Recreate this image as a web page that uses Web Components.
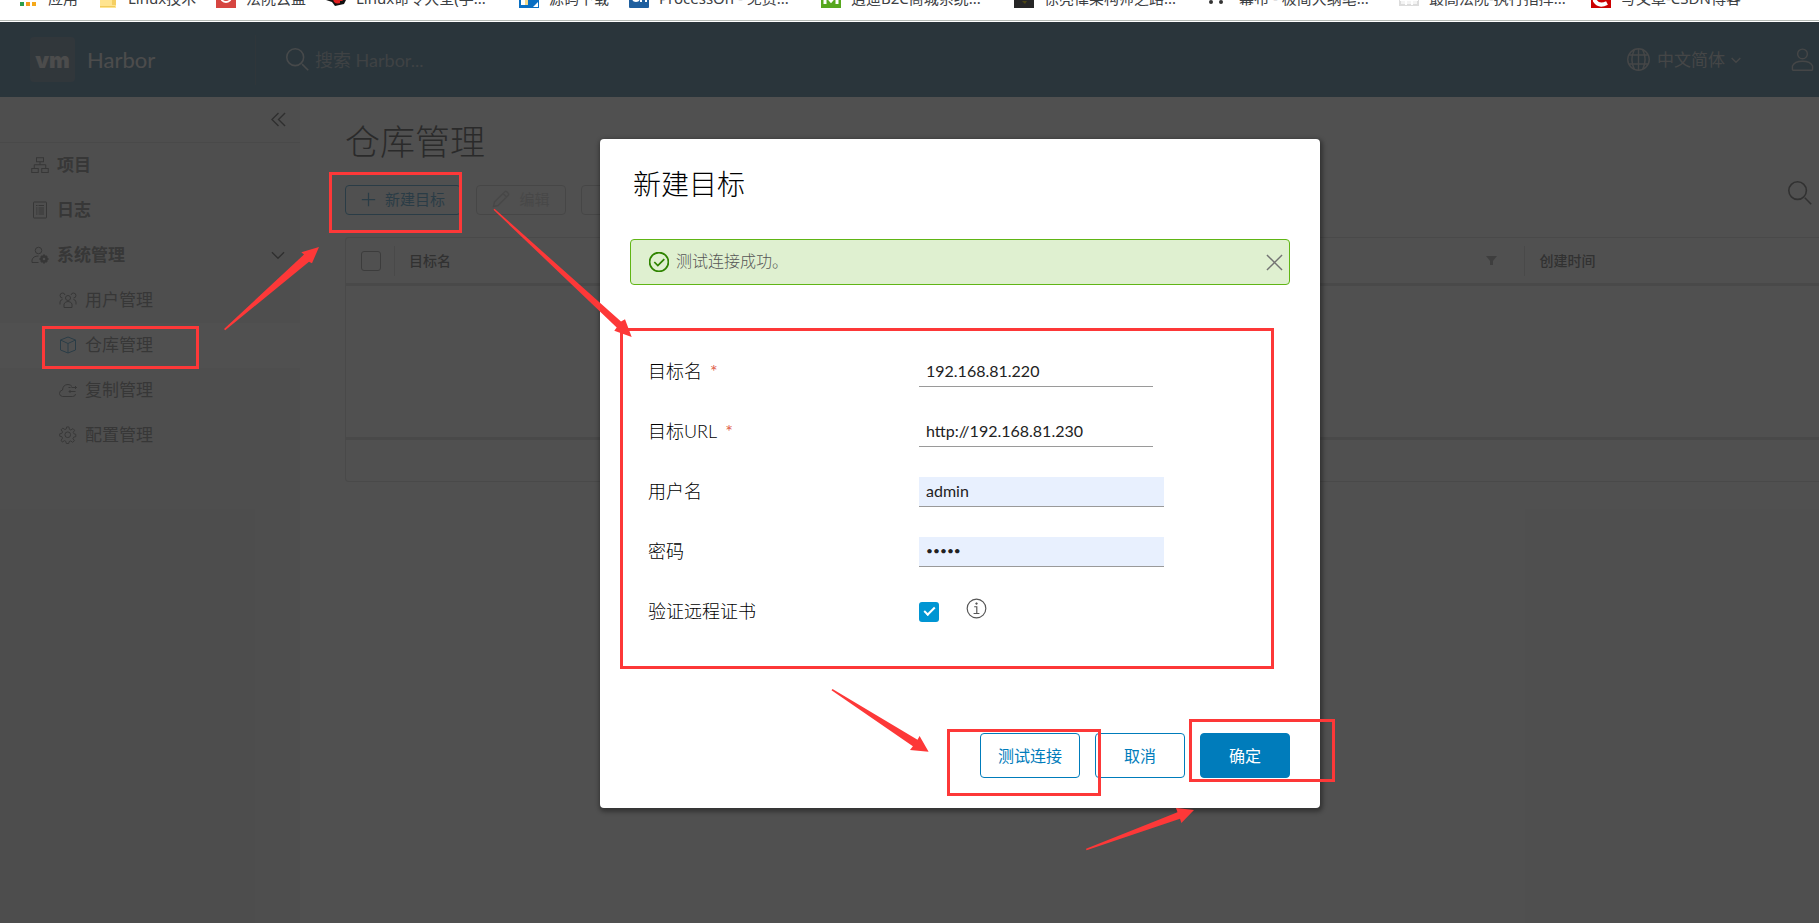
<!DOCTYPE html>
<html lang="zh-CN">
<head>
<meta charset="utf-8">
<meta name="viewport" content="width=device-width, initial-scale=1">
<title>Harbor</title>
<style>
  html, body { margin: 0; height: 100%; }
  body {
    position: relative;
    display: flex;
    flex-direction: column;
    min-height: 100vh;
    overflow: hidden;
    background: #fff;
    color: #000;
    font: 400 16px/24px Lato, "Noto Sans CJK SC", sans-serif;
  }
</style>
</head>
<body>
<bookmark-bar>
  <bookmark-item icon="apps" style="--w:80px">应用</bookmark-item>
  <bookmark-item icon="folder" style="--w:116px">Linux技术</bookmark-item>
  <bookmark-item icon="court" style="--w:110px">法院云盘</bookmark-item>
  <bookmark-item icon="redhat" style="--w:193px">Linux命令大全(手...</bookmark-item>
  <bookmark-item icon="source" style="--w:110px">源码下载</bookmark-item>
  <bookmark-item icon="on" style="--w:192px">ProcessOn - 免费...</bookmark-item>
  <bookmark-item icon="em" style="--w:193px">逍遥B2C商城系统...</bookmark-item>
  <bookmark-item icon="dark" style="--w:195px">徐亮偉架构师之路...</bookmark-item>
  <bookmark-item icon="mubu" style="--w:190px">幕布 - 极简大纲笔...</bookmark-item>
  <bookmark-item icon="doc" style="--w:192px">最高法院-执行指挥...</bookmark-item>
  <bookmark-item icon="csdn" style="--w:160px">写文章-CSDN博客</bookmark-item>
</bookmark-bar>
<harbor-app>
  <harbor-header></harbor-header>
  <side-nav slot="nav">
    <nav-item icon="projects" group>项目</nav-item>
    <nav-item icon="logs" group>日志</nav-item>
    <nav-item icon="admin" group open>系统管理</nav-item>
    <nav-item icon="users">用户管理</nav-item>
    <nav-item icon="cube" active>仓库管理</nav-item>
    <nav-item icon="cloud">复制管理</nav-item>
    <nav-item icon="cog">配置管理</nav-item>
  </side-nav>
  <registry-page slot="main"></registry-page>
  <modal-dialog slot="modal" heading="新建目标">
    <alert-bar>测试连接成功。</alert-bar>
    <form-row label="目标名" required value="192.168.81.220"></form-row>
    <form-row label="目标URL" required value="http://192.168.81.230"></form-row>
    <form-row label="用户名" filled value="admin"></form-row>
    <form-row label="密码" filled type="password" value="admin"></form-row>
    <form-row label="验证远程证书" type="checkbox"></form-row>
    <clr-button slot="footer">测试连接</clr-button>
    <clr-button slot="footer">取消</clr-button>
    <clr-button slot="footer" primary>确定</clr-button>
  </modal-dialog>
</harbor-app>
<markup-layer></markup-layer>

<script>
const ICONS = {
  apps: '<g><rect x="0" y="14" width="4" height="4" fill="#2a9d4c"/><rect x="6" y="14" width="4" height="4" fill="#f59b1a"/><rect x="12" y="14" width="4" height="4" fill="#f5a81a"/></g>|0 0 20 20',
  folder: '<path d="M0 4h7l2 3h7v13H0z" fill="#ffe48f"/><path d="M12 11h4v6h-4z" fill="#f5cf62"/><path d="M0 18h15v1H0z" fill="#f0ca5c"/>|0 0 20 20',
  court: '<rect width="20" height="20" fill="#d64541"/><path d="M5 9a5 5 0 0 0 10 0" fill="none" stroke="#fff" stroke-width="2"/><path d="M8 10h5" stroke="#fff" stroke-width="2"/>|0 0 20 20',
  redhat: '<path d="M0 12l6 2 3 4 9-2 2-4-2-3H4z" fill="#111"/><path d="M6 9h12l-2 5q-5 3-8 0z" fill="#e02020"/><path d="M14 13h4v3h-4z" fill="#111"/>|0 0 20 20',
  source: '<rect width="20" height="20" fill="#0b6fc2"/><path d="M2 1h6v16H2z" fill="#fff"/><path d="M6 1h3v16H6z" fill="#f3d98c"/><path d="M14 19l5-5v5z" fill="#fff"/>|0 0 20 20',
  on: '<rect width="20" height="20" rx="1" fill="#1e5f9f"/><circle cx="7" cy="10" r="3" fill="none" stroke="#fff" stroke-width="2"/><path d="M12 14V8q5-2 5 1v5" fill="none" stroke="#fff" stroke-width="2"/>|0 0 20 20',
  em: '<rect width="20" height="20" fill="#57a81f"/><path d="M4 16V6l6 7 6-7v10" fill="none" stroke="#fff" stroke-width="3"/>|0 0 20 20',
  dark: '<rect width="20" height="20" fill="#262626"/><path d="M8 13h5l-2 3z" fill="#4d4714"/>|0 0 20 20',
  mubu: '<circle cx="2" cy="14" r="2" fill="#333"/><circle cx="12" cy="14" r="2" fill="#333"/>|0 0 20 20',
  doc: '<path d="M1 1h18v16H1z" fill="#f4f4f4" stroke="#dcdcdc"/><path d="M1 12h18M7 1v16M13 1v16" stroke="#fff"/>|0 0 20 20',
  csdn: '<rect width="20" height="20" fill="#c00"/><path d="M16 15q-8 4-12-2-1-4 3-8" fill="none" stroke="#fff" stroke-width="4"/>|0 0 20 20',
  search: '<circle cx="15" cy="15" r="11" /><path d="M24 24l8 8"/>|3 3 30 30',
  globe: '<circle cx="18" cy="18" r="15.5"/><path d="M18 2.500v31M4.500 11.500h27M4.500 24.500h27M12 4q-7 14 0 28M24 4q7 14 0 28"/>|0 0 36 36',
  user: '<circle cx="18" cy="10" r="7"/><path d="M3.500 32.500v-5q3-7 14.500-7t14.500 7v5q0 1-1 1h-27q-1 0-1-1z"/>|1 0 34 36',
  caret: '<path d="M5 12l13 13 13-13"/>|3 6 30 24',
  dblleft: '<path d="M18 4L4 18l14 14M32 4L18 18l14 14"/>|2 2 32 32',
  projects: '<rect x="11" y="3.500" width="14" height="8"/><path d="M18 11.500v6M6.500 24v-6.500h23V24"/><rect x="1.500" y="25" width="13" height="8"/><rect x="21.500" y="25" width="13" height="8"/>|0 0 36 36',
  logs: '<rect x="5" y="2" width="26" height="32" rx="1"/><path d="M10 9h3M15 9h11M10 14h3M15 14h11M10 18h3M15 18h11M10 22h3M15 22h11M10 26h3M15 26h11"/>|0 0 36 36',
  admin: '<circle cx="15" cy="9" r="6.500"/><path d="M15 33H2V28q2-8 13-8"/><circle cx="26" cy="26" r="5" stroke-width="5"/><path d="M26 17v4M26 31v4M17 26h4M31 26h4M20 20l3 3M29 29l3 3M32 20l-3 3M23 29l-3 3" stroke-width="4"/>|0 0 36 36',
  users: '<circle cx="18" cy="14" r="5"/><path d="M10 33v-7q2-5 8-5t8 5v7z"/><path d="M12 8a5 5 0 1 0-5 6M24 8a5 5 0 1 1 5 6M7 17q-5 1-5 5v5M29 17q5 1 5 5v5"/>|0 0 36 36',
  cube: '<path d="M18 2l15 6v20l-15 6-15-6V8zM3 8l15 7 15-7M18 15v19"/>|0 0 36 36',
  cloud: '<path d="M33 26q0 5-6 5H7q-6-1-6-6 0-6 6-7 1-11 11-11 5 0 8 4"/><path d="M19 13h4M25 13h10M32 10l3 3-3 3M33 21H20M23 18l-3 3 3 3"/>|0 0 36 36',
  cog: '<path d="M15.500 2h5l1 5 3 1.500 4.500-3 3.500 3.500-3 4.500 1.500 3 4 1v5l-4.500 1-1.500 3 3 4.500-3.500 3.500-4.500-3-3 1.500-1 4h-5l-1-4.500-3-1.500-4.500 3L4 30l3-4.500-1.500-3-4.500-1v-5l4.500-1 1.500-3L4 8l3.500-3.500 4.500 3 3-1.500z"/><circle cx="18" cy="18.500" r="6"/>|0 0 37 38',
  plus: '<path d="M18 2v32M2 18h32"/>|0 0 36 36',
  pencil: '<path d="M3 33l2-9L26 3q2-1 4 1l2 2q2 2 1 4L12 31zM22 7l7 7"/>|0 0 36 36',
  filter: '<path d="M0 1h11L7 6v4H4V6z" fill="currentColor" stroke="none"/>|0 0 12 12',
  check: '<circle cx="18" cy="18" r="16"/><path d="M10 18l6 6 11-11"/>|1 1 34 34',
  close: '<path d="M2 2l32 32M34 2L2 34"/>|0 0 36 36',
  info: '<circle cx="18" cy="18" r="16"/><path d="M14 15h4.500v11M13 26.500h10"/><circle cx="18" cy="9.500" r="1.500" fill="currentColor" stroke-width="1"/>|0 0 36 36'
};

class ShadowElement extends HTMLElement {
  constructor() { super(); this.attachShadow({ mode: 'open' }); }
  connectedCallback() { this.shadowRoot.innerHTML = this.render(); }
  attr(n, d = '') { return this.getAttribute(n) ?? d; }
}
const define = (name, render) =>
  customElements.define(name, class extends ShadowElement { render() { return render(this); } });

define('ui-icon', el => {
  const [body, box] = ICONS[el.attr('name')].split('|');
  return `<style>
    :host { display: block; flex: none; width: var(--size, 18px); height: var(--size, 18px); }
    svg { display: block; width: 100%; height: 100%; }
  </style>
  <svg viewBox="${box}" fill="none" stroke="${el.hasAttribute('solid') ? 'none' : 'currentColor'}" stroke-width="${el.attr('weight', '2')}" aria-hidden="true">${body}</svg>`;
});

define('bookmark-bar', () => `<style>
    :host { display: flex; align-items: flex-end; box-sizing: border-box; height: 21px; flex: none;
      padding: 0 0 12px 20px; margin-bottom: 1px; border-bottom: 1px solid #b4b9b4; overflow: hidden;
      color: #3c4043; font: 15px/20px "Noto Sans", "Noto Sans CJK SC", sans-serif; }
  </style><slot></slot>`);

define('bookmark-item', el => `<style>
    :host { display: block; flex: 0 0 var(--w); }
    a { display: flex; align-items: center; gap: ${el.attr('icon') === 'folder' || el.attr('icon') === 'apps' ? 8 : 10}px; color: inherit; text-decoration: none; white-space: nowrap; }
    ui-icon { --size: 20px; }
  </style><a href="#"><ui-icon solid name="${el.attr('icon')}"></ui-icon><span><slot></slot></span></a>`);

define('harbor-app', () => `<style>
    :host { position: relative; display: flex; flex-direction: column; flex: 1; min-height: 0; overflow: hidden; background: #fafafa; }
    .body { display: flex; flex: 1; min-height: 0; }
  </style>
  <slot></slot>
  <div class="body"><slot name="nav"></slot><slot name="main"></slot></div>
  <slot name="modal"></slot>`);

define('harbor-header', () => `<style>
    :host { display: flex; align-items: center; flex: none; height: 75px; padding: 0 4px 0 30px; box-sizing: border-box;
      background: #004a70; color: #fff; font-size: 17px; }
    .brand { display: flex; align-items: center; gap: 12px; width: 225px; color: #e4e4e4; text-decoration: none; font-size: 22px; }
    .logo { display: grid; place-items: center; width: 45px; height: 45px; border-radius: 4px; background: #315672;
      font: 900 22px/28px Inter, sans-serif; }
    .search { display: flex; align-items: center; gap: 6px; flex: 1; height: 50px; padding-left: 30px; border-left: 1px solid #23506d; color: #c0d0d8; }
    .search ui-icon { --size: 23px; }
    input { flex: 1; min-width: 0; padding: 0; border: 0; outline: 0; background: none; color: #fff; font: inherit; font-size: 18px; }
    input::placeholder { color: #8ca0ae; opacity: 1; }
    .lang { display: flex; align-items: center; gap: 6px; margin-right: 49px; color: #b4bcc0; }
    .lang ui-icon { --size: 25px; }
    .lang ui-icon.c { --size: 10px; }
    select { appearance: none; border: 0; padding: 0; background: none; color: inherit; font: inherit; }
    button { padding: 0; border: 0; background: none; color: #b4bcc0; }
    button ui-icon { --size: 25px; }
  </style>
  <a class="brand" href="#"><span class="logo">vm</span><span>Harbor</span></a>
  <label class="search"><ui-icon name="search"></ui-icon><input type="search" placeholder="搜索 Harbor..." aria-label="搜索"></label>
  <label class="lang"><ui-icon name="globe"></ui-icon><select aria-label="语言"><option>中文简体</option></select><ui-icon class="c" name="caret" weight="4"></ui-icon></label>
  <button aria-label="用户"><ui-icon name="user"></ui-icon></button>`);

define('side-nav', () => `<style>
    :host { display: block; flex: none; width: 300px; background: #eee; color: #565656; }
    .top { display: flex; justify-content: flex-end; align-items: center; height: 45px; padding-right: 14px; border-bottom: 1px solid #ccc; }
    .top button { padding: 0; border: 0; background: none; color: #222; --size: 15px; }
    nav { display: block; }
  </style>
  <div class="top"><button aria-label="收起"><ui-icon name="dblleft" weight="3"></ui-icon></button></div>
  <nav><slot></slot></nav>`);

define('nav-item', el => `<style>
    :host { display: block; }
    a { display: flex; align-items: center; gap: 8px; box-sizing: border-box; height: 45px; padding: 0 15px 2px ${el.hasAttribute('group') ? 31 : 59}px;
      color: #565656; text-decoration: none; font-size: 17px; font-weight: ${el.hasAttribute('group') ? 700 : 400};
      background: ${el.hasAttribute('active') ? '#fff' : 'none'}; }
    span { flex: 1; }
    .i { --size: 18px; ${el.hasAttribute('active') ? 'color:#007cbb;' : ''} }
    .c { --size: 14px; color: #222; }
  </style>
  <a href="#"><ui-icon class="i" name="${el.attr('icon')}"></ui-icon><span><slot></slot></span>${el.hasAttribute('open') ? '<ui-icon class="c" name="caret" weight="3"></ui-icon>' : ''}</a>`);

define('registry-page', () => `<style>
    :host { display: block; flex: 1; min-width: 0; padding: 19px 0 0 45px; overflow: hidden; }
    h1 { margin: 0; font: 200 35px/48px "Noto Sans CJK SC", sans-serif; }
    .bar { display: flex; align-items: flex-start; gap: 15px; height: 30px; margin: 21px 0 22px; padding-right: 7px; }
    .bar button { display: flex; align-items: center; justify-content: center; gap: 9px; box-sizing: border-box; height: 30px; padding: 0 0 2px;
      border: 1px solid #bbb; border-radius: 4px; background: none; color: #c4c4c4; font: 15px/20px Lato, "Noto Sans CJK SC", sans-serif; }
    .bar .new { width: 116px; border-color: #007cbb; color: #007cbb; --size: 15px; }
    .bar .edit { width: 90px; --size: 18px; }
    .bar .find { align-items: flex-start; height: 36px; margin: -4px 0 0 auto; border: 0; color: #333; --size: 24px; }
  </style>
  <h1>仓库管理</h1>
  <div class="bar">
    <button class="new"><ui-icon name="plus" weight="3"></ui-icon>新建目标</button>
    <button class="edit" disabled><ui-icon name="pencil" weight="3"></ui-icon>编辑</button>
    <button class="edit" disabled aria-label="删除"></button>
    <button class="find" aria-label="搜索"><ui-icon name="search"></ui-icon></button>
  </div>
  <data-grid></data-grid>`);

define('data-grid', () => `<style>
    :host { display: block; border: 1px solid #ccc; border-right: 0; border-radius: 4px 0 0 4px; }
    table { width: 100%; border-collapse: collapse; table-layout: fixed; }
    th { height: 45px; padding: 0; border-bottom: 3px solid #ccc; text-align: left; font: 500 14px/20px "Noto Sans CJK SC", sans-serif; color: #333; }
    .cell { display: flex; align-items: center; height: 30px; padding-left: 14px; }
    .cell span { padding-bottom: 2px; }
    th + th .cell { border-left: 1px solid #ccc; }
    .cell.end { justify-content: flex-end; padding-right: 26px; border-left-color: transparent !important; color: #888; --size: 12px; }
    input { appearance: none; width: 20px; height: 20px; margin: 0 0 0 1px; border: 1px solid #777; border-radius: 3px; }
    .body td { height: 151px; padding: 0; border-bottom: 3px solid #ccc; }
    .foot td { height: 41px; padding: 0; }
  </style>
  <table>
    <colgroup><col style="width:48px"><col style="width:25%"><col><col style="width:20%"></colgroup>
    <thead><tr>
      <th><div class="cell"><input type="checkbox" aria-label="全选"></div></th>
      <th><div class="cell"><span>目标名</span></div></th>
      <th><div class="cell end"><ui-icon name="filter"></ui-icon></div></th>
      <th><div class="cell"><span>创建时间</span></div></th>
    </tr></thead>
    <tbody><tr class="body"><td colspan="4"></td></tr><tr class="foot"><td colspan="4"></td></tr></tbody>
  </table>`);

define('modal-dialog', el => `<style>
    :host { position: absolute; inset: 0; display: flex; align-items: center; justify-content: center; padding: 2px 0 0 101px;
      background: rgba(49, 49, 49, .85); }
    section { display: flex; flex-direction: column; box-sizing: border-box; width: 720px; max-width: 90%; padding: 24px 30px 30px;
      border-radius: 4px; background: #fff; box-shadow: 1px 2px 4px 2px rgba(0, 0, 0, .35); }
    h2 { margin: 0 0 36px; padding-left: 3px; font: 200 28px/40px "Noto Sans CJK SC", sans-serif; }
    footer { display: flex; justify-content: flex-end; gap: 15px; margin-top: 91px; }
  </style>
  <section role="dialog" aria-modal="true" aria-label="${el.attr('heading')}">
    <h2>${el.attr('heading')}</h2>
    <slot></slot>
    <footer><slot name="footer"></slot></footer>
  </section>`);

define('alert-bar', () => `<style>
    :host { display: flex; align-items: center; gap: 7px; box-sizing: border-box; height: 46px; margin-bottom: 57px; padding: 0 6px 0 18px;
      border: 1px solid #60b515; border-radius: 4px; background: #dff0d0; color: #565656; font-weight: 300; }
    span { flex: 1; padding-bottom: 2px; }
    .ok { --size: 20px; color: #2f8400; }
    button { padding: 0; border: 0; background: none; color: #737373; --size: 17px; }
  </style>
  <ui-icon class="ok" name="check" weight="3"></ui-icon><span><slot></slot></span>
  <button aria-label="关闭"><ui-icon name="close" weight="3"></ui-icon></button>`);

define('form-row', el => {
  const type = el.attr('type', 'text');
  const field = type === 'checkbox'
    ? '<input id="f" type="checkbox" checked><ui-icon name="info"></ui-icon>'
    : `<input id="f" class="t${el.hasAttribute('filled') ? ' filled' : ''}" type="${type}" value="${el.attr('value')}">`;
  return `<style>
    :host { display: flex; align-items: center; height: 60px; padding-left: 18px; }
    label { flex: 0 0 271px; padding-bottom: 2px; font-size: 18px; font-weight: 300; }
    b { margin-left: 8px; color: #e0604c; font-weight: 400; font-size: 18px; }
    .t { box-sizing: border-box; width: 234px; height: 30px; padding: 0 7px 3px; border: 0; border-bottom: 1px solid #9a9a9a; border-radius: 0; outline: 0;
      background: none; color: #222; font: 400 16px/24px Lato, "Noto Sans CJK SC", sans-serif; }
    .filled { width: 245px; background: #e8f0fe; }
    [type=password] { font-size: 12px; }
    [type=checkbox] { appearance: none; display: grid; place-items: center; width: 20px; height: 20px; margin: 0 27px 0 0; border-radius: 3px; background: #0095d3; }
    [type=checkbox]::after { content: ""; width: 9px; height: 4px; margin-bottom: 4px; border: solid #fff; border-width: 0 0 2px 2px; transform: rotate(-45deg); }
    ui-icon { --size: 21px; margin-bottom: 7px; color: #565656; }
  </style>
  <label for="f">${el.attr('label')}${el.hasAttribute('required') ? '<b>*</b>' : ''}</label>${field}`;
});

define('clr-button', el => `<style>
    :host { display: block; }
    button { box-sizing: border-box; min-width: 90px; height: 45px; padding: 0 17px; border: 1px solid #007cbb; border-radius: 4px;
      background: ${el.hasAttribute('primary') ? '#007cbb' : '#fff'}; color: ${el.hasAttribute('primary') ? '#fff' : '#007cbb'};
      font: 400 16px/24px Lato, "Noto Sans CJK SC", sans-serif; }
  </style><button type="button"><slot></slot></button>`);

/* Step-by-step red frames and arrows drawn over the page. */
define('markup-layer', () => `<style>
    :host { position: absolute; inset: 0; overflow: hidden; pointer-events: none; }
    svg { display: block; width: 100%; height: 100%; }
  </style>
  <svg aria-hidden="true">
    <g fill="none" stroke="#fd3838" stroke-width="3">
      <rect x="43.500" y="327.500" width="154" height="40"/>
      <rect x="330.500" y="173.500" width="130" height="58"/>
      <rect x="621.500" y="329.500" width="651" height="338"/>
      <rect x="948.500" y="730.500" width="151" height="64"/>
      <rect x="1190.500" y="720.500" width="143" height="60"/>
    </g>
    <g fill="#fd3838">
      <path d="M224 329L304 254.500l-2.700-2.200L319 247l-7 16.300-3-1.600L225.200 330.200z"/>
      <path d="M494.500 208.800L621 321.500l4-2.200 6.700 17.700-17.400-6.300 2.400-3.200L493.500 209.800z"/>
      <path d="M832.500 689l85 50.700 2.100-3.700 9 15.700-18.600-1.700 2.900-3.700L831.500 690.200z"/>
      <path d="M1086 848.800l91.500-36.500-1.500-4.300 18 2-12.600 13-1.400-4.300L1086.500 850.200z"/>
    </g>
  </svg>`);
</script>
</body>
</html>
